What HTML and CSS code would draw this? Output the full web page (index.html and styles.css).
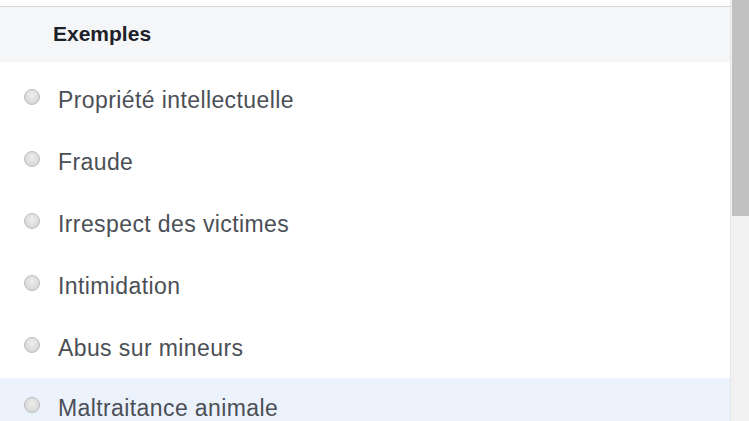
FILE: index.html
```html
<!DOCTYPE html>
<html lang="fr">
<head>
<meta charset="utf-8">
<link rel="stylesheet" href="styles.css">
</head>
<body>
<div class="frame">
  <div class="panel">
    <div class="topgap"></div>
    <div class="header">Exemples</div>
    <ul class="list">
      <li class="item"><span class="radio"></span><span class="label">Propriété intellectuelle</span></li>
      <li class="item"><span class="radio"></span><span class="label">Fraude</span></li>
      <li class="item"><span class="radio"></span><span class="label">Irrespect des victimes</span></li>
      <li class="item"><span class="radio"></span><span class="label">Intimidation</span></li>
      <li class="item"><span class="radio"></span><span class="label">Abus sur mineurs</span></li>
      <li class="item active"><span class="radio"></span><span class="label">Maltraitance animale</span></li>
    </ul>
  </div>
  <div class="scrollbar"><div class="thumb"></div></div>
</div>
</body>
</html>
```
FILE: styles.css
```css
html, body {
  margin: 0;
  padding: 0;
  background: #ffffff;
  overflow: hidden;
}
.frame {
  display: flex;
  width: 749px;
  height: 421px;
  overflow: hidden;
  font-family: "Liberation Sans", Arial, sans-serif;
}
.panel {
  flex: 0 0 730px;
  display: flex;
  flex-direction: column;
  background: #ffffff;
}
.panel > * {
  flex-shrink: 0;
}
.topgap {
  height: 6px;
  border-bottom: 1px solid #d3d6db;
}
.header {
  height: 55px;
  box-sizing: border-box;
  background: #f5f6f7;
  padding: 0 0 2px 53px;
  display: flex;
  align-items: center;
  font-weight: bold;
  font-size: 21px;
  color: #1d2129;
}
.list {
  list-style: none;
  margin: 0;
  padding: 6px 0 0 0;
}
.item {
  height: 62px;
  box-sizing: border-box;
  display: flex;
  align-items: flex-start;
  padding: 21px 0 0 24px;
}
.item.active {
  background: #ebf2fc;
  padding-top: 19px;
}
.radio {
  flex: 0 0 auto;
  width: 14px;
  height: 14px;
  border-radius: 50%;
  border: 1px solid #b9bcc1;
  background: radial-gradient(circle at 50% 40%, #eeeeee 0%, #dcdcdc 60%, #cfcfcf 100%);
}
.label {
  margin-left: 18px;
  margin-top: -2px;
  font-size: 23px;
  line-height: 26px;
  letter-spacing: 0.4px;
  color: #4b4f56;
}
.scrollbar {
  flex: 0 0 19px;
  background: #f1f1f1;
  border-left: 1px solid #e6e6e6;
  box-sizing: border-box;
}
.thumb {
  height: 216px;
  background: #c1c1c1;
  margin-left: 1px;
}
```
